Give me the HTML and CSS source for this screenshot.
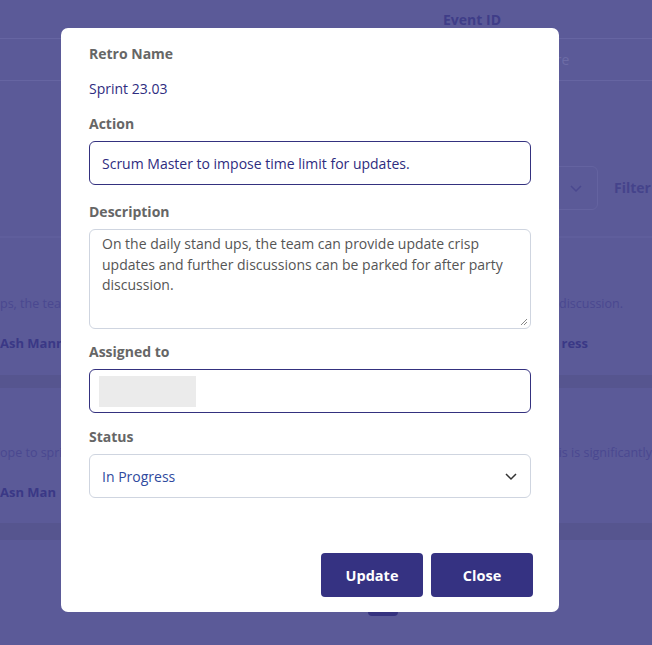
FILE: index.html
```html
<!DOCTYPE html>
<html>
<head>
<meta charset="utf-8">
<link rel="stylesheet" href="styles.css">
</head>
<body>
<div class="page">
  <div class="hdr-row"><span class="hdr-cell">Event ID</span></div>
  <div class="search-row"><span class="placeholder">Score</span></div>
  <div class="filter-row">
    <div class="fake-select">
      <svg class="chev" width="14" height="10" viewBox="0 0 14 10"><path d="M2 3 L7 8 L12 3" fill="none" stroke="#4a488f" stroke-width="1.5"/></svg>
    </div>
    <span class="filter-label">Filter</span>
  </div>
  <div class="card">
    <div class="card-line text-line"><span class="frag-left">ps, the team</span><span class="frag-right">discussion.</span></div>
    <div class="card-line meta-line"><span class="who">Ash Mann</span><span class="state">ress</span></div>
  </div>
  <div class="band"></div>
  <div class="card second">
    <div class="card-line text-line"><span class="frag-left">ope to sprint</span><span class="frag-right edge">is is significantly</span></div>
    <div class="card-line meta-line"><span class="who">Asn Man</span></div>
  </div>
  <div class="band bottom"></div>
  <div class="pager-row"><span class="pager"></span></div>
</div>

<div class="modal">
  <div class="field">
    <div class="label">Retro Name</div>
    <div class="value">Sprint 23.03</div>
  </div>
  <div class="field">
    <div class="label">Action</div>
    <div class="input focus">Scrum Master to impose time limit for updates.</div>
  </div>
  <div class="field">
    <div class="label">Description</div>
    <div class="textarea">On the daily stand ups, the team can provide update crisp updates and further discussions can be parked for after party discussion.
      <svg class="grip" width="8" height="8" viewBox="0 0 8 8"><path d="M7 1 L1 7 M7 4 L4 7" stroke="#888" stroke-width="1"/></svg>
    </div>
  </div>
  <div class="field">
    <div class="label">Assigned to</div>
    <div class="input focus assigned"><span class="chip"></span></div>
  </div>
  <div class="field">
    <div class="label">Status</div>
    <div class="input select">
      <span class="sel-text">In Progress</span>
      <svg width="14" height="10" viewBox="0 0 14 10"><path d="M2 3 L7 8 L12 3" fill="none" stroke="#333" stroke-width="1.5"/></svg>
    </div>
  </div>
  <div class="actions">
    <button class="btn">Update</button>
    <button class="btn">Close</button>
  </div>
</div>
</body>
</html>
```

FILE: styles.css
```css
* { box-sizing: border-box; }
html, body { margin: 0; padding: 0; }
body {
  width: 652px;
  height: 645px;
  overflow: hidden;
  font-family: "Open Sans", "Noto Sans", sans-serif;
  background: #5b5a98;
  position: relative;
}
.page {
  width: 652px;
  height: 645px;
  background: #5b5a98;
  color: #4b4990;
}
.hdr-row {
  height: 39px;
  border-bottom: 1px solid #6665a2;
  padding-left: 443px;
  display: flex;
  align-items: center;
}
.hdr-cell {
  font-weight: 700;
  font-size: 14px;
  color: #3f3d88;
}
.search-row {
  height: 42px;
  border-bottom: 1px solid #6665a2;
  padding-left: 533px;
  display: flex;
  align-items: center;
}
.placeholder { font-size: 14px; color: #6d6ca6; }
.filter-row {
  height: 155px;
  display: flex;
  align-items: flex-start;
  gap: 16px;
  padding-left: 480px;
  padding-top: 85px;
}
.fake-select {
  width: 118px;
  height: 44px;
  border: 1px solid #6463a0;
  border-radius: 6px;
  display: flex;
  align-items: center;
  justify-content: flex-end;
  padding-right: 14px;
}
.filter-label {
  font-weight: 700;
  font-size: 14px;
  color: #45438b;
  line-height: 44px;
}
.card {
  height: 139px;
  border-top: 2px solid #5f5e9c;
  padding-top: 57px;
  display: flex;
  flex-direction: column;
  gap: 23px;
}
.card.second { height: 135px; border-top: none; padding-top: 56px; }
.card-line {
  display: flex;
  justify-content: space-between;
  height: 17px;
  line-height: 17px;
}
.text-line { font-size: 12.5px; color: #4a4890; padding-right: 29px; }
.text-line .edge { margin-right: -29px; }
.meta-line {
  font-weight: 700;
  font-size: 13px;
  color: #3a3886;
  padding-right: 64px;
}
.band { height: 13px; background: #56558f; }
.band.bottom { height: 17px; }
.pager-row {
  padding-top: 66px;
  padding-left: 368px;
}
.pager {
  display: block;
  width: 30px;
  height: 10px;
  border-radius: 4px;
  background: #35327f;
}

.modal {
  position: absolute;
  left: 61px;
  top: 28px;
  width: 498px;
  height: 584px;
  background: #fff;
  border-radius: 7px;
  padding: 15px 28px 0 28px;
  display: flex;
  flex-direction: column;
}
.field { display: flex; flex-direction: column; }
.label {
  font-size: 14px;
  font-weight: 700;
  color: #666;
  line-height: 22px;
  margin-bottom: 6px;
}
.value {
  font-size: 14px;
  color: #2e2c80;
  line-height: 22px;
  margin-top: 7px;
  margin-bottom: 13px;
}
.input {
  height: 44px;
  border: 1px solid #cfd5e0;
  border-radius: 6px;
  padding: 0 12px;
  display: flex;
  align-items: center;
  font-size: 14px;
  color: #2e2c80;
  margin-bottom: 16px;
}
.input.focus { border-color: #34317f; }
.input.assigned { margin-bottom: 13px; }
.textarea {
  position: relative;
  height: 100px;
  border: 1px solid #cfd5e0;
  border-radius: 6px;
  padding: 4px 12px;
  font-size: 14px;
  line-height: 20.5px;
  color: #555;
  margin-bottom: 12px;
}
.grip { position: absolute; right: 2px; bottom: 2px; }
.assigned { padding-left: 9px; }
.chip {
  width: 97px;
  height: 31px;
  background: #ebebeb;
}
.select { justify-content: space-between; padding-right: 12px; margin-bottom: 0; }
.sel-text { color: #2f4a9e; }
.actions {
  margin-top: 55px;
  display: flex;
  justify-content: flex-end;
  gap: 8px;
  margin-right: -2px;
}
.btn {
  width: 102px;
  height: 44px;
  background: #353282;
  color: #fff;
  border: none;
  border-radius: 4px;
  font-family: "Open Sans", "Noto Sans", sans-serif;
  font-weight: 700;
  font-size: 14.5px;
}
```
